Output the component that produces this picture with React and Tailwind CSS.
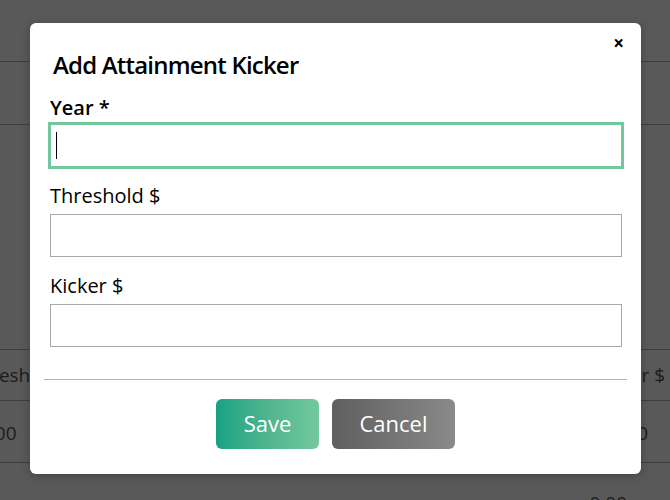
import React from "react";

export default function App() {
  return (
    <div className="relative w-[670px] h-[500px] overflow-hidden bg-[#595959] font-['Open_Sans',sans-serif] text-[#1c1c1c]">
      {/* background table behind the overlay */}
      <div className="flex flex-col">
        <div className="h-[62px] border-b border-[#3d3d3d]"></div>
        <div className="h-[63px] border-b border-[#3d3d3d]"></div>
        <div className="h-[225px] border-b border-[#3d3d3d]"></div>
        <div className="h-[51px] border-b border-[#3d3d3d] flex items-center justify-between text-[19px]">
          <span className="ml-[-31px]">Threshold $</span>
          <span className="mr-[5px]">Kicker $</span>
        </div>
        <div className="h-[62px] border-b border-[#3d3d3d] flex items-center justify-between text-[19px]">
          <span className="ml-[-21px] mt-[4px]">0.00</span>
          <span className="mr-[22px] mt-[4px]">0.00</span>
        </div>
        <div className="h-[40px] flex items-end justify-between text-[19px]">
          <span className="ml-[-2px] mb-[-14px]">n</span>
          <span className="mr-[43px] mb-[-14px]">0.00</span>
        </div>
      </div>

      {/* modal */}
      <div className="absolute left-[30px] top-[23px] w-[611px] h-[451px] bg-white rounded-[6px] shadow-[0_2px_8px_rgba(0,0,0,0.25)] flex flex-col">
        <button className="absolute right-[17px] top-[11px] text-[19px] font-bold leading-none text-black">
          ×
        </button>
        <h2 className="mt-[26px] ml-[23px] text-[24px] font-semibold tracking-[-0.8px] leading-[32px] text-black">
          Add Attainment Kicker
        </h2>
        <div className="px-[20px] flex flex-col">
          <label className="mt-[13px] text-[20px] font-semibold leading-[28px] text-black">Year *</label>
          <div className="mt-[2px] h-[43px] w-[572px] border border-[#72c89d] outline-2 outline-[#72c89d] flex items-center px-[5px]">
            <div className="w-[1px] h-[27px] bg-black"></div>
          </div>
          <label className="mt-[15px] text-[20px] leading-[28px] text-black">Threshold $</label>
          <div className="mt-[4px] h-[43px] w-[572px] border border-[#a9a9a9]"></div>
          <label className="mt-[15px] text-[20px] leading-[28px] text-black">Kicker $</label>
          <div className="mt-[4px] h-[43px] w-[572px] border border-[#a9a9a9]"></div>
        </div>
        <div className="mt-[32px] mx-[14px] h-[1px] bg-[#b3b3b3]"></div>
        <div className="mt-[19px] flex justify-center gap-[13px]">
          <button className="w-[103px] h-[50px] pb-[3px] rounded-[6px] bg-gradient-to-r from-[#14a283] to-[#74c99c] text-white text-[22px] leading-none">
            Save
          </button>
          <button className="w-[123px] h-[50px] pb-[3px] rounded-[6px] bg-gradient-to-r from-[#5f5f5f] to-[#8a8a8a] text-white text-[22px] leading-none">
            Cancel
          </button>
        </div>
      </div>
    </div>
  );
}
